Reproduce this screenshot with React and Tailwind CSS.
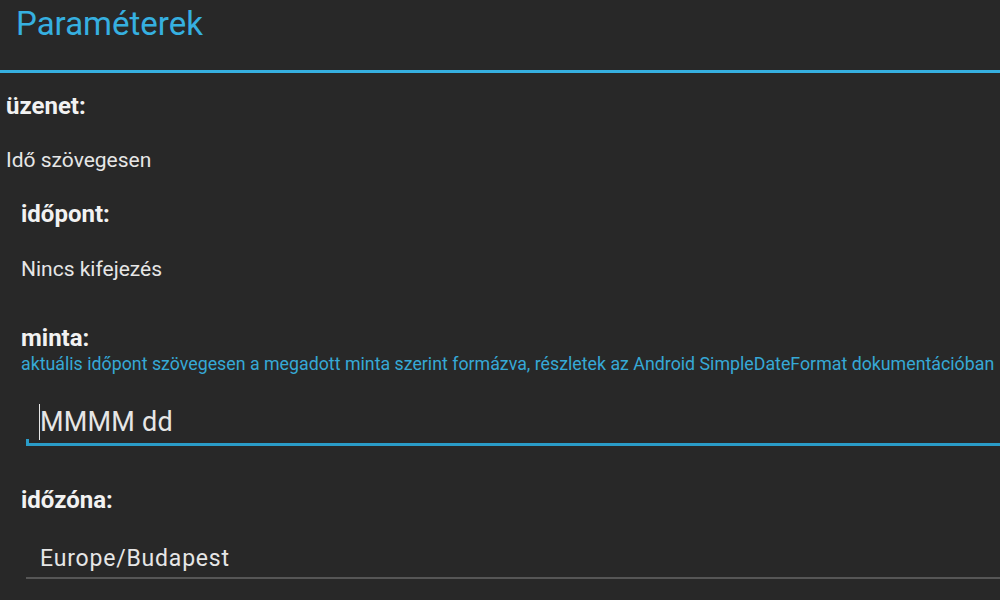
export default function App() {
  return (
    <div className="w-[1000px] h-[600px] overflow-hidden bg-[#282828] font-['Roboto',sans-serif]">
      <div className="h-[70px] pl-[16px] pt-[4px]">
        <h1 className="text-[33px] leading-[40px] text-[#36b0e0]">Paraméterek</h1>
      </div>
      <div className="h-[3px] bg-[#36b0e0]" />

      <div className="pl-[6px]">
        <p className="mt-[19px] text-[24px] leading-[28px] font-bold text-[#f2f2f2]">üzenet:</p>
        <p className="mt-[28px] text-[21px] leading-[24px] text-[#e6e6e6]">Idő szövegesen</p>
      </div>

      <div className="pl-[21px]">
        <p className="mt-[28px] text-[24px] leading-[28px] font-bold text-[#f2f2f2]">időpont:</p>
        <p className="mt-[29px] text-[21px] leading-[24px] text-[#e6e6e6]">Nincs kifejezés</p>

        <p className="mt-[43px] text-[24px] leading-[28px] font-bold text-[#f2f2f2]">minta:</p>
        <p className="mt-[1px] text-[17.8px] leading-[22px] text-[#36a9d6] whitespace-nowrap">
          aktuális időpont szövegesen a megadott minta szerint formázva, részletek az Android SimpleDateFormat dokumentációban
        </p>
      </div>

      <div className="ml-[26px] mt-[29px] relative">
        <div className="pl-[13px] h-[36px] flex items-start">
          <span className="w-px h-[36px] bg-[#e6e6e6]" />
          <span className="text-[27px] leading-[36px] tracking-[0.2px] text-[#e6e6e6]">MMMM dd</span>
        </div>
        <div className="mt-[3px] h-[3px] bg-[#2a9cc8]" />
        <div className="absolute left-0 bottom-0 w-[3px] h-[7px] bg-[#2a9cc8]" />
      </div>

      <div className="pl-[21px]">
        <p className="mt-[40px] text-[24px] leading-[28px] font-bold text-[#f2f2f2]">időzóna:</p>
      </div>
      <div className="ml-[26px] mt-[30px]">
        <p className="pl-[14px] text-[23px] leading-[30px] tracking-[0.8px] text-[#e6e6e6]">Europe/Budapest</p>
        <div className="mt-[3px] h-[2px] bg-[#565656]" />
      </div>
    </div>
  );
}
